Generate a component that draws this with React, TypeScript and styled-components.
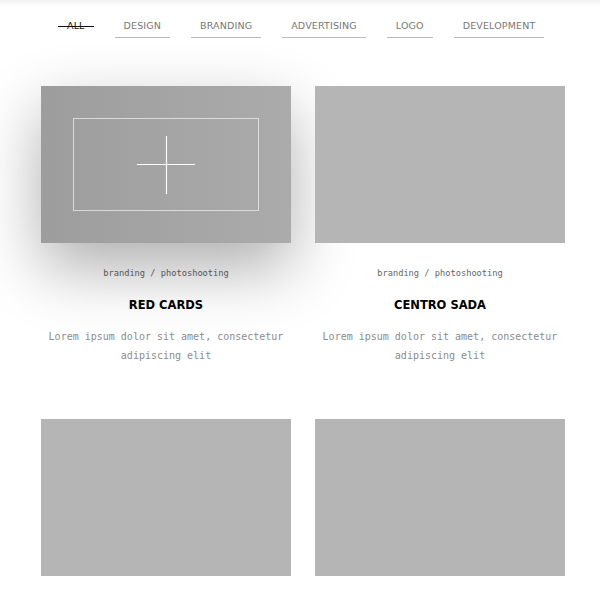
import React from 'react';
import styled, { createGlobalStyle } from 'styled-components';

const Global = createGlobalStyle`
  body {
    margin: 0;
    background: #fff;
    font-family: "DejaVu Sans", sans-serif;
  }
`;

type Work = {
  title: string;
  category: string;
  text: string;
  active?: boolean;
};

const filters = ['All', 'Design', 'Branding', 'Advertising', 'Logo', 'Development'];

const works: Work[] = [
  { title: 'Red Cards', category: 'branding / photoshooting', text: 'Lorem ipsum dolor sit amet, consectetur adipiscing elit', active: true },
  { title: 'Centro Sada', category: 'branding / photoshooting', text: 'Lorem ipsum dolor sit amet, consectetur adipiscing elit' },
  { title: 'Project Three', category: 'design / logo', text: 'Lorem ipsum dolor sit amet, consectetur adipiscing elit' },
  { title: 'Project Four', category: 'advertising', text: 'Lorem ipsum dolor sit amet, consectetur adipiscing elit' },
];

const App: React.FC = () => {
  return (
    <>
      <Global />
      <Page>
        <TopShade />
        <Filters>
          {filters.map((f, i) => (
            <FilterItem key={f} $active={i === 0}>
              {f}
            </FilterItem>
          ))}
        </Filters>
        <Grid>
          {works.map((w) => (
            <Card key={w.title}>
              <Thumb $active={w.active}>
                {w.active && (
                  <Frame>
                    <svg width="58" height="58" viewBox="0 0 58 58">
                      <line x1="0" y1="28.5" x2="58" y2="28.5" stroke="#fff" strokeWidth="1.2" />
                      <line x1="29.5" y1="0" x2="29.5" y2="58" stroke="#fff" strokeWidth="1.2" />
                    </svg>
                  </Frame>
                )}
              </Thumb>
              <Category>{w.category}</Category>
              <Title>{w.title}</Title>
              <Desc>{w.text}</Desc>
            </Card>
          ))}
        </Grid>
      </Page>
    </>
  );
};

const Page = styled.div`
  position: relative;
  width: 600px;
  height: 600px;
  overflow: hidden;
  background: #fff;
`;

const TopShade = styled.div`
  position: absolute;
  top: 0;
  left: 0;
  right: 0;
  height: 6px;
  background: linear-gradient(rgba(0, 0, 0, 0.05), rgba(0, 0, 0, 0));
`;

const Filters = styled.ul`
  list-style: none;
  margin: 0;
  padding: 20px 0 0 58px;
  display: flex;
  gap: 21px;
`;

const FilterItem = styled.li<{ $active?: boolean }>`
  position: relative;
  font-family: "DejaVu Sans", sans-serif;
  font-size: 9.5px;
  font-weight: 400;
  letter-spacing: 0.15px;
  text-transform: uppercase;
  color: ${(p) => (p.$active ? '#111' : '#777')};
  padding: 0 9px 5px;
  line-height: 12px;
  border-bottom: 1.5px solid ${(p) => (p.$active ? 'transparent' : '#bcbcbc')};

  ${(p) =>
    p.$active &&
    `
    &::after {
      content: '';
      position: absolute;
      left: 0;
      right: 0;
      top: 6px;
      height: 1px;
      background: #111;
    }
  `}
`;

const Grid = styled.div`
  display: grid;
  grid-template-columns: 250px 250px;
  column-gap: 24px;
  row-gap: 24px;
  margin: 48px 0 0 41px;
`;

const Card = styled.div`
  display: flex;
  flex-direction: column;
  align-items: center;
  height: 309px;
`;

const Thumb = styled.div<{ $active?: boolean }>`
  position: relative;
  width: 250px;
  height: 157px;
  flex-shrink: 0;
  background: ${(p) => (p.$active ? 'linear-gradient(90deg, #9d9d9d, #ababab)' : '#b5b5b5')};
  box-shadow: ${(p) => (p.$active ? '0 25px 65px rgba(0, 0, 0, 0.32)' : 'none')};
`;

const Frame = styled.div`
  position: absolute;
  top: 32px;
  bottom: 32px;
  left: 32px;
  right: 32px;
  border: 1px solid rgba(255, 255, 255, 0.6);
  display: flex;
  align-items: center;
  justify-content: center;
`;

const Category = styled.div`
  margin-top: 24px;
  font-family: "DejaVu Sans Mono", monospace;
  font-size: 8.7px;
  color: #666;
  line-height: 12px;
`;

const Title = styled.h3`
  margin: 19px 0 0;
  font-family: "DejaVu Sans", sans-serif;
  font-weight: 700;
  font-size: 11.5px;
  text-transform: uppercase;
  color: #000;
  line-height: 14px;
`;

const Desc = styled.p`
  margin: 15px 0 0;
  width: 250px;
  text-align: center;
  font-family: "DejaVu Sans Mono", monospace;
  font-size: 10px;
  line-height: 19px;
  color: #8c8c8c;
`;

export default App;
